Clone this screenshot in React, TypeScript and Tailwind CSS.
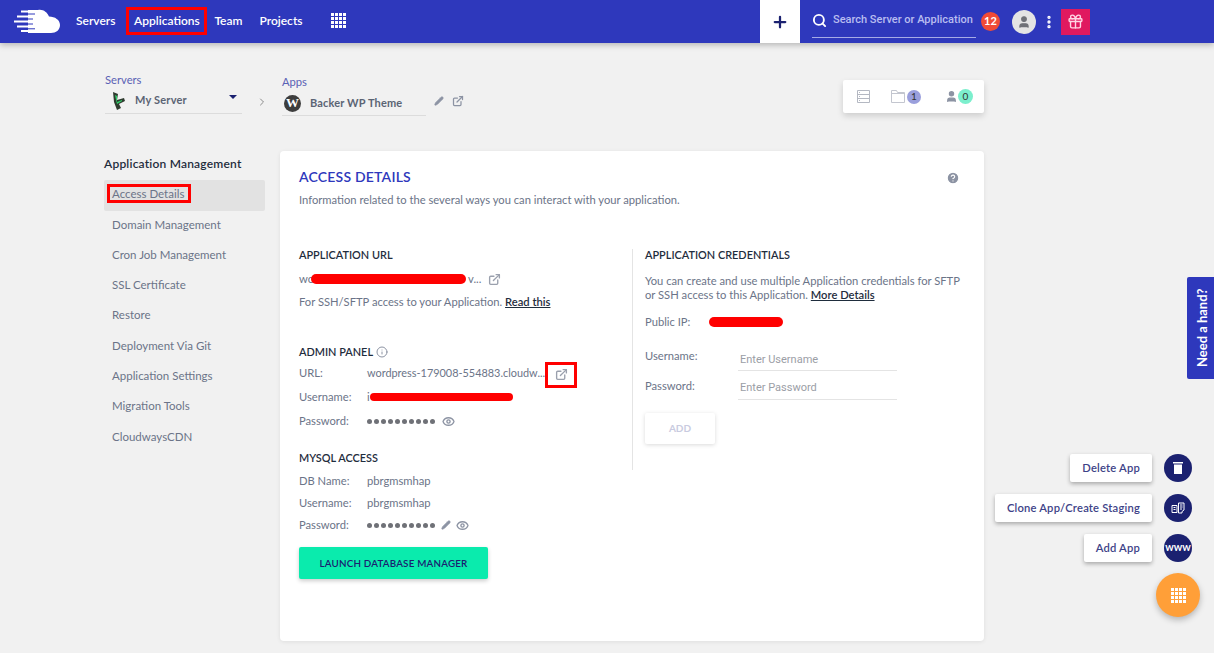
import React from "react";
import { Search, Plus, User, EllipsisVertical, Gift, ExternalLink, Pencil, Eye, Info, CircleHelp, ChevronRight } from "lucide-react";

const sideItems = [
  "Domain Management",
  "Cron Job Management",
  "SSL Certificate",
  "Restore",
  "Deployment Via Git",
  "Application Settings",
  "Migration Tools",
  "CloudwaysCDN",
];

function Logo() {
  return (
    <svg width="47" height="25" viewBox="0 0 47 25" className="block">
      <path d="M14 1 H24 C29 0 33 3 35 7.500 C41 7.500 46 11 46 16 C46 21 42 24 37 24 H14 Z" fill="#fff" />
      <path d="M7 2.500 H22 M3 7.500 H20 M0 12.500 H18 M3 17.500 H20 M7 22 H20" stroke="#fff" strokeWidth="2" />
      <path d="M12 5 H21 M10 10 H19 M10 15 H19 M12 19.800 H21" stroke="#2e38bc" strokeWidth="1" />
    </svg>
  );
}

function Dots() {
  return (
    <div className="grid grid-cols-4 gap-[1px] w-[15px]">
      {[...Array(16)].map((_, i) => (
        <span key={i} className="w-[3px] h-[3px] bg-white" />
      ))}
    </div>
  );
}

function Scribble({ className }: { className: string }) {
  return <span className={`absolute h-[10px] rounded-full bg-[#ff0000] ${className}`} />;
}

function PasswordDots({ count }: { count: number }) {
  return (
    <span className="flex gap-[2px] items-center">
      {[...Array(count)].map((_, i) => (
        <span key={i} className="w-[5px] h-[5px] rounded-full bg-[#6f7177]" />
      ))}
    </span>
  );
}

function Row({ label, className, children }: { label: string; className: string; children: React.ReactNode }) {
  return (
    <div className={`flex items-center h-4 ${className}`}>
      <span className="w-[68px] shrink-0 text-[#6b7488]">{label}</span>
      {children}
    </div>
  );
}

function FloatAction({ label, children, bottomGap }: { label: string; children: React.ReactNode; bottomGap: string }) {
  return (
    <div className={`flex items-center justify-end gap-3 ${bottomGap}`}>
      <div className="h-7 px-3 flex items-center bg-white rounded-[2px] shadow-[0_2px_4px_rgba(0,0,0,0.3)] text-[11.2px] font-semibold tracking-[0.2px] text-[#3d4287]">
        {label}
      </div>
      <div className="w-7 h-7 rounded-full bg-[#1b2170] flex items-center justify-center text-white">{children}</div>
    </div>
  );
}

export default function App() {
  return (
    <div className="relative h-[653px] w-[1214px] overflow-hidden bg-[#f1f1f1] text-[11.2px] text-[#6b7488] font-['Lato','Open_Sans',sans-serif]">
      {/* top bar */}
      <header className="h-[43px] bg-[#2e38bc] shadow-[0_2px_6px_rgba(0,0,0,0.25)] flex items-center relative text-white">
        <div className="w-[760px] shrink-0 flex items-center">
          <div className="ml-[14px] w-[47px]">
            <Logo />
          </div>
          <nav className="flex items-center ml-[15px] mb-[2px] text-[12px] font-semibold">
            <span>Servers</span>
            <span className="ml-[11px] w-[81px] h-[28px] flex items-center justify-center border-[3px] border-[#ff0000]">Applications</span>
            <span className="ml-[7px]">Team</span>
            <span className="ml-[17px]">Projects</span>
          </nav>
          <div className="ml-[28px] mb-[3px]">
            <Dots />
          </div>
        </div>
        <div className="w-10 h-[43px] bg-white flex items-center justify-center text-[#1b2170]">
          <Plus size={18} strokeWidth={3} />
        </div>
        <div className="ml-3 w-[164px] h-[32px] pb-[1px] border-b border-[#a6abe6] flex items-center gap-[6px] text-[#b9bdf0] font-['Roboto',sans-serif] text-[11px] font-medium">
          <Search size={15} strokeWidth={3} className="text-white shrink-0" />
          <span className="whitespace-nowrap">Search Server or Application</span>
        </div>
        <div className="ml-[5px] w-[19px] h-[19px] rounded-full bg-[#f04b37] flex items-center justify-center text-[11px] font-bold">12</div>
        <div className="ml-3 w-6 h-6 rounded-full bg-[#e4e4e4] flex items-center justify-center text-[#6f7177]">
          <User size={14} fill="currentColor" />
        </div>
        <EllipsisVertical size={16} strokeWidth={3} className="ml-[5px]" />
        <div className="ml-[4px] w-[29px] h-[26px] bg-[#e0195f] flex items-center justify-center">
          <Gift size={17} className="text-[#ffd5e4]" />
        </div>
      </header>

      <main className="pl-[104px] w-[880px] box-content">
        {/* breadcrumb row */}
        <div className="h-[108px] flex items-start">
          <div className="mt-[31px] ml-[1px] w-[137px]">
            <div className="h-3 leading-3 text-[#5a62b5]">Servers</div>
            <div className="h-[28px] pt-[2px] border-b border-[#dcdcdc] flex items-center text-[11px] font-bold tracking-[0.2px] text-[#5b6474] relative">
              <svg width="18" height="20" viewBox="0 0 16 20" className="ml-[5px] mr-[7px]">
                <path d="M2 1 L7 3 L6 9 L13 7 L14 10 L8 13 L10 17 L6 19 L3 11 Z" fill="#2f3b2f" />
                <path d="M4 4 L6 5 L6 11 L11 9 L11 10 L6 13 Z" fill="#2fd06a" />
              </svg>
              My Server
              <span className="absolute right-[5px] top-[9px] w-0 h-0 border-x-[4px] border-x-transparent border-t-[4px] border-t-[#1b2170]" />
            </div>
          </div>
          <ChevronRight size={12} className="mt-[53px] ml-[14px] text-[#8b8b8b]" />
          <div className="mt-[33px] ml-[14px] w-[144px]">
            <div className="h-3 leading-3 text-[#5a62b5]">Apps</div>
            <div className="h-[28px] pt-[3px] border-b border-[#dcdcdc] flex items-center text-[11px] font-bold tracking-[0.15px] text-[#5b6474]">
              <span className="ml-[2px] w-[17px] h-[17px] mr-[9px] rounded-full bg-[#3d3d3d] text-white text-[13px] font-bold font-['Liberation_Serif',serif] flex items-center justify-center">W</span>
              Backer WP Theme
            </div>
          </div>
          <Pencil size={10} fill="currentColor" className="mt-[53px] ml-[8px] text-[#8c93a3]" />
          <ExternalLink size={12} className="mt-[52px] ml-[8px] text-[#8c93a3]" strokeWidth={2.5} />
          <div className="mt-[37px] ml-auto w-[141px] h-[33px] bg-white rounded-[2px] shadow-[0_3px_6px_rgba(0,0,0,0.15)] flex items-center text-[10px] text-[#333]">
            <svg width="13" height="13" viewBox="0 0 13 13" className="ml-[14px]" fill="none" stroke="#b4b8c2">
              <path d="M.5.500h12v12H.5zM.5 4.500h12M.5 8.500h12" />
              <path d="M2 2.500h1M2 6.500h1M2 10.500h1" />
            </svg>
            <svg width="14" height="13" viewBox="0 0 14 13" className="ml-[21px]" fill="none" stroke="#c3c6cf">
              <path d="M.5 12.500V.500h5l1 2h7v10zM.5 3.500h13" />
            </svg>
            <span className="ml-[2px] w-[14px] h-[14px] rounded-full bg-[#9a9fdc] flex items-center justify-center">1</span>
            <User size={13} fill="currentColor" className="ml-[24px] text-[#8c93a3]" />
            <span className="w-[15px] h-[15px] rounded-full bg-[#7cefcd] flex items-center justify-center">0</span>
          </div>
        </div>

        <div className="flex items-start">
          {/* side menu */}
          <aside className="w-[161px] shrink-0 text-[11.5px]">
            <div className="h-[16px] mt-[5px] leading-4 text-[12px] font-semibold tracking-[0.2px] text-[#1f2d3d] whitespace-nowrap">Application Management</div>
            <div className="mt-2 h-[31px] bg-[#e2e2e2] rounded-[2px] flex items-start pt-[4px] pl-[3px]">
              <span className="h-[19px] px-[2px] w-[84px] border-[3px] border-[#ff0000] flex items-center whitespace-nowrap">Access Details</span>
            </div>
            <ul className="mt-[-2px]">
              {sideItems.map((item) => (
                <li key={item} className="h-[30.3px] pl-2 flex items-center">
                  {item}
                </li>
              ))}
            </ul>
          </aside>

          {/* access details */}
          <section className="ml-[15px] w-[704px] h-[490px] bg-white rounded-[4px] shadow-[0_1px_4px_rgba(0,0,0,0.08)] relative pl-[19px]">
            <CircleHelp size={14} fill="#8c93a3" className="absolute right-[24px] top-[20px] text-white" />
            <h2 className="pt-[17px] h-[35px] leading-[18px] text-[14px] font-semibold text-[#2e38bc] tracking-[0.2px]">ACCESS DETAILS</h2>
            <p className="mt-[6px] h-4 leading-4">Information related to the several ways you can interact with your application.</p>

            <div className="mt-[41px] flex items-start">
              {/* left column */}
              <div className="w-[333px] shrink-0">
                <h3 className="h-3 leading-3 text-[10.9px] font-semibold text-[#1f2d3d]">APPLICATION URL</h3>
                <div className="mt-[10px] h-4 flex items-center relative">
                  <span>wo</span>
                  <Scribble className="left-[12px] w-[155px]" />
                  <span className="ml-[154px]">v...</span>
                  <ExternalLink size={13} strokeWidth={2.5} className="ml-[7px] text-[#9aa0ad]" />
                </div>
                <p className="mt-[7px] h-4 leading-4">
                  For SSH/SFTP access to your Application. <span className="underline text-[#1f2d3d] font-semibold">Read this</span>
                </p>

                <h3 className="mt-[34px] h-4 flex items-center gap-[3px] text-[10.9px] font-semibold text-[#1f2d3d]">
                  ADMIN PANEL <Info size={12} className="text-[#8c93a3] font-normal" />
                </h3>
                <Row label="URL:" className="mt-[5px]">
                  <span className="w-[178px] whitespace-nowrap text-[10.9px]">wordpress-179008-554883.cloudw...</span>
                  <span className="mt-[3px] w-8 h-[26px] border-[3px] border-[#ff0000] flex items-center justify-center shrink-0">
                    <ExternalLink size={13} strokeWidth={2.5} className="text-[#9aa0ad]" />
                  </span>
                </Row>
                <Row label="Username:" className="mt-[8px] relative">
                  <span>i</span>
                  <Scribble className="left-[71px] top-[4px] !h-2 w-[143px]" />
                </Row>
                <Row label="Password:" className="mt-[8px]">
                  <PasswordDots count={10} />
                  <Eye size={13} strokeWidth={2.5} className="ml-[7px] text-[#8c93a3]" />
                </Row>

                <h3 className="mt-[21px] h-4 leading-4 text-[10.9px] font-semibold text-[#1f2d3d]">MYSQL ACCESS</h3>
                <Row label="DB Name:" className="mt-[7px]">
                  <span>pbrgmsmhap</span>
                </Row>
                <Row label="Username:" className="mt-[6px]">
                  <span>pbrgmsmhap</span>
                </Row>
                <Row label="Password:" className="mt-[6px]">
                  <PasswordDots count={10} />
                  <Pencil size={10} fill="currentColor" className="ml-[6px] text-[#8c93a3]" />
                  <Eye size={13} strokeWidth={2.5} className="ml-[5px] text-[#8c93a3]" />
                </Row>
                <button className="mt-[14px] w-[189px] h-8 rounded-[2px] bg-[#0aebad] shadow-[0_2px_4px_rgba(0,0,0,0.2)] text-[9.8px] font-semibold tracking-[0.2px] text-[#1b2170]">
                  LAUNCH DATABASE MANAGER
                </button>
              </div>

              {/* right column */}
              <div className="border-l border-[#e4e4e4] h-[221px] pl-3 w-[340px]">
                <h3 className="h-3 leading-3 text-[10.9px] font-semibold text-[#1f2d3d]">APPLICATION CREDENTIALS</h3>
                <p className="mt-[13px] leading-[14px]">
                  You can create and use multiple Application credentials for SFTP<br />
                  or SSH access to this Application. <span className="underline text-[#1f2d3d] font-semibold">More Details</span>
                </p>
                <div className="mt-[12px] h-4 flex items-center relative">
                  <span>Public IP:</span>
                  <Scribble className="left-[64px] w-[74px]" />
                </div>
                <div className="mt-[18px] flex">
                  <span className="w-[93px] h-4 leading-4">Username:</span>
                  <div className="w-[159px] h-[23px] pt-[4px] pl-[2px] border-b border-[#e4e4e4] leading-4 text-[#9b9ea6] font-['Roboto',sans-serif] text-[11px]">Enter Username</div>
                </div>
                <div className="mt-[7px] flex">
                  <span className="w-[93px] h-4 leading-4">Password:</span>
                  <div className="w-[159px] h-[22px] pt-[2px] pl-[2px] border-b border-[#e4e4e4] leading-4 text-[#9b9ea6] font-['Roboto',sans-serif] text-[11px]">Enter Password</div>
                </div>
                <button className="mt-[13px] w-[70px] h-[31px] rounded-[2px] bg-white shadow-[0_1px_4px_rgba(0,0,0,0.15)] text-[10px] font-bold text-[#c9cbe0]">ADD</button>
              </div>
            </div>
          </section>
        </div>
      </main>

      {/* help tab */}
      <div className="absolute right-0 top-[277px] w-[27px] h-[102px] bg-[#2e38bc] rounded-l-[2px] flex items-center justify-center pl-[3px]">
        <span className="whitespace-nowrap -rotate-90 text-[13px] font-bold text-white">Need a hand?</span>
      </div>

      {/* floating actions */}
      <div className="absolute right-[22px] top-[454px]">
        <FloatAction label="Delete App" bottomGap="mb-3">
          <svg width="10" height="12" viewBox="0 0 10 12" fill="currentColor">
            <path d="M0 0h10v1.500H0zM1 2.500h8V12H1z" />
          </svg>
        </FloatAction>
        <FloatAction label="Clone App/Create Staging" bottomGap="mb-3">
          <svg width="14" height="13" viewBox="0 0 14 13" fill="none" stroke="currentColor" strokeWidth="1">
            <path d="M1 3.500h5v7H1zM7.500 1h5.500v7l-2 1.500v1.500H7.500z" />
            <path d="M2.500 5.500h2M2.500 7.500h2M9 3h2.500M9 5h2.500M9 7h2" />
          </svg>
        </FloatAction>
        <FloatAction label="Add App" bottomGap="">
          <span className="text-[8px] font-black">WWW</span>
        </FloatAction>
      </div>
      <div className="absolute left-[1156px] top-[573px] w-11 h-11 rounded-full bg-[#ff9f38] shadow-[0_3px_6px_rgba(0,0,0,0.25)] flex items-center justify-center">
        <Dots />
      </div>
    </div>
  );
}
